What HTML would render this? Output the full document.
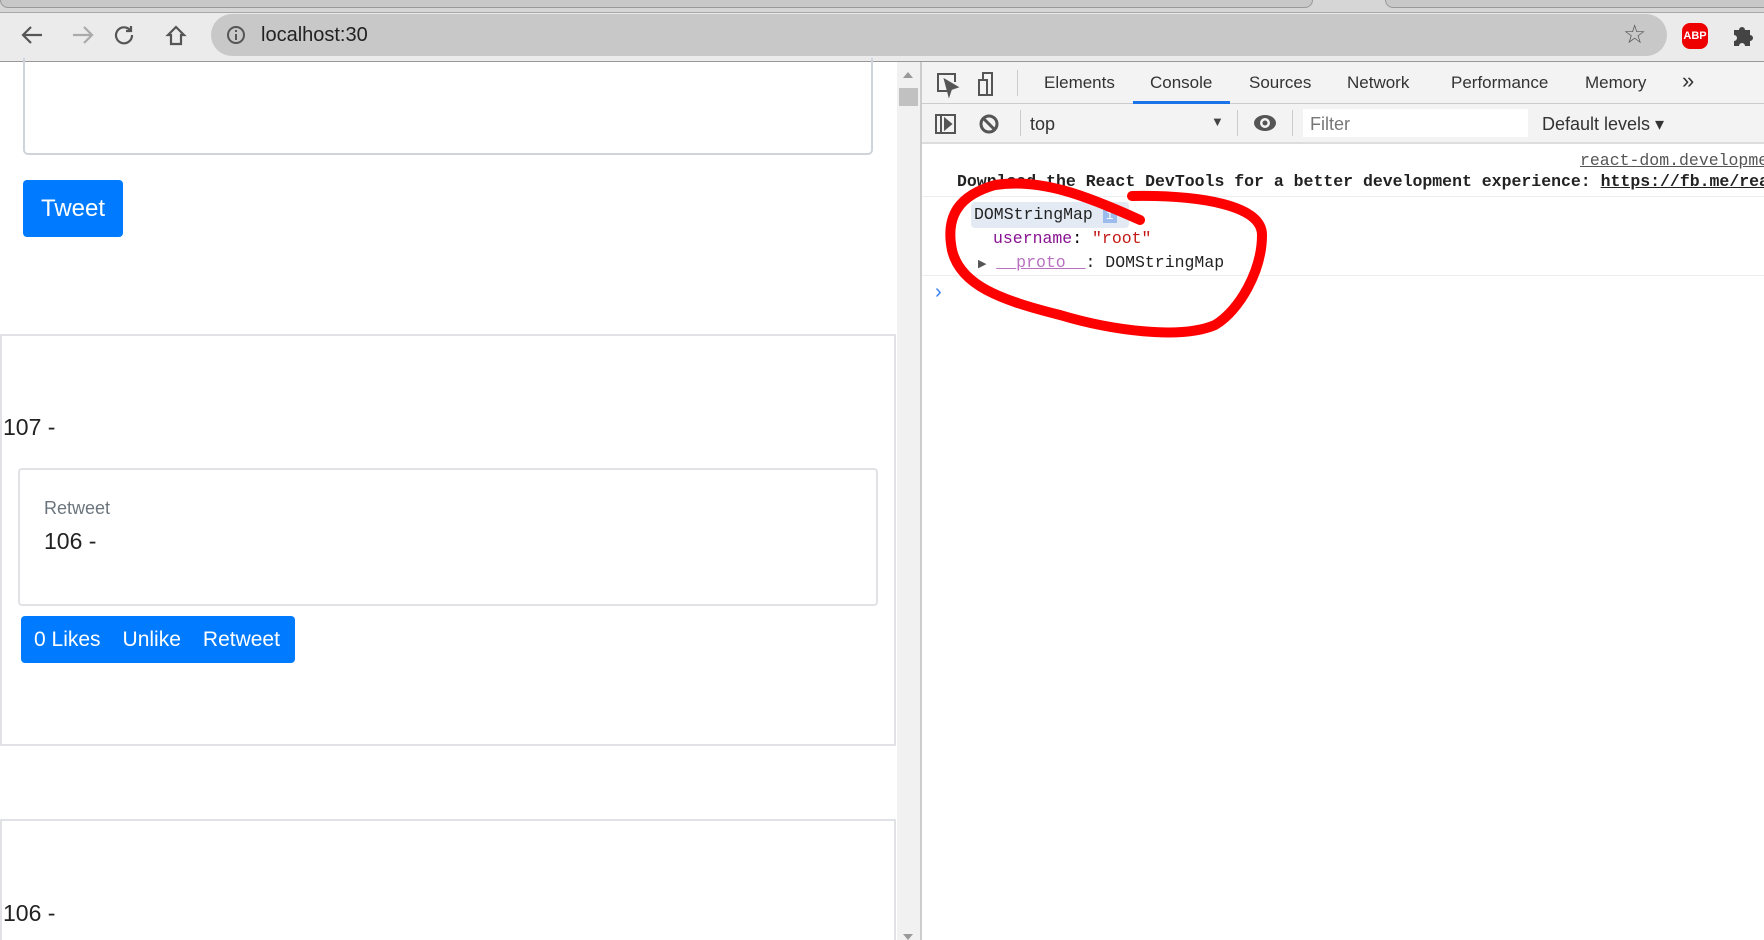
<!DOCTYPE html>
<html style="overflow:hidden"><head><meta charset="utf-8"><style>
*{box-sizing:border-box;margin:0;padding:0}
html,body{width:1764px;height:940px;overflow:hidden}
body{background:#fff;font-family:"Liberation Sans",sans-serif;position:relative}
.a{position:absolute}
.mono{font-family:"Liberation Mono",monospace;font-size:16.5px;white-space:nowrap}
.tab{position:absolute;top:73px;font-size:17px;color:#333}
</style></head><body>
<div class="a" style="left:0;top:0;width:1764px;height:13px;background:#d6d6d6;border-bottom:1px solid #a8a8a8"></div>
<div class="a" style="left:0;top:0;width:1313px;height:8px;background:#c8c8c8;border-radius:0 0 10px 10px;border:1px solid #999;border-top:none"></div>
<div class="a" style="left:1385px;top:0;width:379px;height:8px;background:#c8c8c8;border-radius:0 0 0 10px;border:1px solid #999;border-top:none;border-right:none"></div>
<div class="a" style="left:0;top:13px;width:1764px;height:49px;background:#ebebeb;border-bottom:1px solid #9a9a9a"></div>
<svg class="a" style="left:18px;top:22px" width="180" height="30" viewBox="0 0 180 30" fill="none" stroke-width="2.2">
<path d="M24 13H6M13 5L5 13l8 8" stroke="#555"/>
<path d="M55 13H73M66 5l8 8-8 8" stroke="#aaa"/>
<path d="M112 8a8 8 0 1 0 2 5M113 4v5h-5" stroke="#555"/>
<path d="M158 5l-8 8h3v9h10v-9h3z" stroke="#555"/>
</svg>
<div class="a" style="left:211px;top:14px;width:1456px;height:42px;background:#c8c8c8;border-radius:21px"></div>
<svg class="a" style="left:226px;top:25px" width="20" height="20" viewBox="0 0 20 20"><circle cx="10" cy="10" r="8" fill="none" stroke="#555" stroke-width="2"/><path d="M10 9v6M10 5v2" stroke="#555" stroke-width="2"/></svg>
<div class="a" style="left:261px;top:24px;font-size:20px;color:#222">localhost:30</div>
<div class="a" style="left:1623px;top:19px;font-size:26px;color:#555">☆</div>
<div class="a" style="left:1682px;top:23px;width:26px;height:26px;background:#e00;border-radius:8px;color:#fff;font-size:11px;font-weight:bold;text-align:center;line-height:26px">ABP</div>
<svg class="a" style="left:1731px;top:22px" width="26" height="26" viewBox="0 0 26 26"><path d="M3 8h5a3 3 0 1 1 6 0h5v5a3 3 0 1 1 0 6v5h-5a3 3 0 1 0-6 0H3v-5a3 3 0 1 0 0-6z" fill="#444"/></svg>
<div class="a" style="left:23px;top:58px;width:850px;height:97px;border:2px solid #ced4da;border-top:none;border-radius:0 0 5px 5px"></div>
<div class="a" style="left:23px;top:180px;width:100px;height:57px;background:#007bff;border-radius:4px;color:#fff;font-size:24px;text-align:center;line-height:57px">Tweet</div>
<div class="a" style="left:0;top:334px;width:896px;height:412px;border:2px solid #e0e2e5"></div>
<div class="a" style="left:3px;top:414px;font-size:23px;color:#222">107 -</div>
<div class="a" style="left:18px;top:468px;width:860px;height:138px;border:2px solid #e0e2e5;border-radius:4px"></div>
<div class="a" style="left:44px;top:498px;font-size:18px;color:#6c757d">Retweet</div>
<div class="a" style="left:44px;top:528px;font-size:23px;color:#222">106 -</div>
<div class="a" style="left:21px;top:616px;width:274px;height:47px;background:#007bff;border-radius:4px;color:#fff;font-size:21px;line-height:47px;white-space:nowrap"><span style="margin-left:13px">0 Likes</span><span style="margin-left:22px">Unlike</span><span style="margin-left:22px">Retweet</span></div>
<div class="a" style="left:0;top:819px;width:896px;height:130px;border:2px solid #e0e2e5"></div>
<div class="a" style="left:3px;top:900px;font-size:23px;color:#222">106 -</div>
<div class="a" style="left:897px;top:62px;width:23px;height:878px;background:#f1f1f1"></div>
<div class="a" style="left:903px;top:72px;width:0;height:0;border:5px solid transparent;border-bottom:6px solid #999;border-top:none"></div>
<div class="a" style="left:899px;top:88px;width:19px;height:18px;background:#c1c1c1"></div>
<div class="a" style="left:903px;top:934px;width:0;height:0;border:5px solid transparent;border-top:6px solid #999;border-bottom:none"></div>
<div class="a" style="left:920px;top:62px;width:844px;height:878px;background:#fff;border-left:2px solid #ccc"></div>
<div class="a" style="left:922px;top:62px;width:842px;height:42px;background:#f3f3f3;border-bottom:1px solid #ccc"></div>
<svg class="a" style="left:935px;top:71px" width="70" height="28" viewBox="0 0 70 28" fill="none" stroke="#555" stroke-width="2"><path d="M12 20H3V3h17v8"/><path d="M10 9l4 15 2-6 6-2z" fill="#555"/><rect x="44" y="9" width="8" height="15"/><path d="M48 9V2h9v22h-5"/></svg>
<div class="a" style="left:1017px;top:70px;width:1px;height:26px;background:#ccc"></div>
<div class="tab" style="left:1044px">Elements</div>
<div class="tab" style="left:1150px">Console</div>
<div class="tab" style="left:1249px">Sources</div>
<div class="tab" style="left:1347px">Network</div>
<div class="tab" style="left:1451px">Performance</div>
<div class="tab" style="left:1585px">Memory</div>
<div class="tab" style="left:1682px;top:68px;font-size:22px">»</div>
<div class="a" style="left:1133px;top:101px;width:97px;height:3px;background:#1a73e8"></div>
<div class="a" style="left:922px;top:104px;width:842px;height:40px;background:#f3f3f3;border-bottom:2px solid #ddd"></div>
<svg class="a" style="left:934px;top:113px" width="70" height="22" viewBox="0 0 70 22" fill="none" stroke="#555" stroke-width="2"><rect x="2" y="2" width="19" height="18"/><path d="M7 2v18"/><path d="M11 6l6 5-6 5z" fill="#555"/><circle cx="55" cy="11" r="8" stroke-width="3"/><path d="M49 5l12 12" stroke-width="3"/></svg>
<div class="a" style="left:1020px;top:110px;width:1px;height:26px;background:#ccc"></div>
<div class="a" style="left:1030px;top:114px;font-size:18px;color:#333">top</div>
<div class="a" style="left:1211px;top:114px;font-size:13px;color:#444">▼</div>
<div class="a" style="left:1237px;top:110px;width:1px;height:26px;background:#ccc"></div>
<svg class="a" style="left:1253px;top:113px" width="24" height="20" viewBox="0 0 24 20"><ellipse cx="12" cy="10" rx="11" ry="8" fill="#555"/><circle cx="12" cy="10" r="5" fill="#f3f3f3"/><circle cx="12" cy="10" r="2.5" fill="#555"/></svg>
<div class="a" style="left:1292px;top:110px;width:1px;height:26px;background:#ccc"></div>
<div class="a" style="left:1303px;top:109px;width:225px;height:28px;background:#fff"></div>
<div class="a" style="left:1310px;top:114px;font-size:18px;color:#777">Filter</div>
<div class="a" style="left:1542px;top:114px;font-size:18px;color:#333">Default levels ▾</div>
<div class="a mono" style="left:1580px;top:151px;color:#555;text-decoration:underline">react-dom.developme</div>
<div class="a mono" style="left:957px;top:172px;font-weight:bold;color:#222">Download the React DevTools for a better development experience: <span style="text-decoration:underline">https://fb.me/rea</span></div>
<div class="a" style="left:922px;top:196px;width:842px;height:1px;background:#eee"></div>
<div class="a" style="left:971px;top:202px;width:158px;height:26px;background:#e3eaf4;border-radius:4px"></div>
<div class="a mono" style="left:974px;top:205px;color:#222">DOMStringMap <span style="background:#9bbcec;color:#fff;font-size:13px;padding:0 3px">i</span></div>
<div class="a mono" style="left:993px;top:229px"><span style="color:#881391">username</span>: <span style="color:#c41a16">"root"</span></div>
<div class="a mono" style="left:978px;top:253px;color:#222"><span style="font-size:11px;color:#555">▶</span> <span style="color:#b870c0;text-decoration:underline">__proto__</span>: DOMStringMap</div>
<div class="a" style="left:922px;top:275px;width:842px;height:1px;background:#eee"></div>
<div class="a" style="left:935px;top:281px;font-size:20px;color:#367cf1">›</div>
<svg class="a" style="left:0;top:0" width="1764" height="940"><path d="M1132 196 C1200 195 1262 205 1262 235 C1262 270 1240 310 1215 325 C1180 340 1110 330 1060 315 C1000 300 960 285 952 250 C945 215 960 195 995 185 C1040 178 1085 195 1140 220" fill="none" stroke="#f00" stroke-width="10" stroke-linecap="round"/></svg>
</body></html>
